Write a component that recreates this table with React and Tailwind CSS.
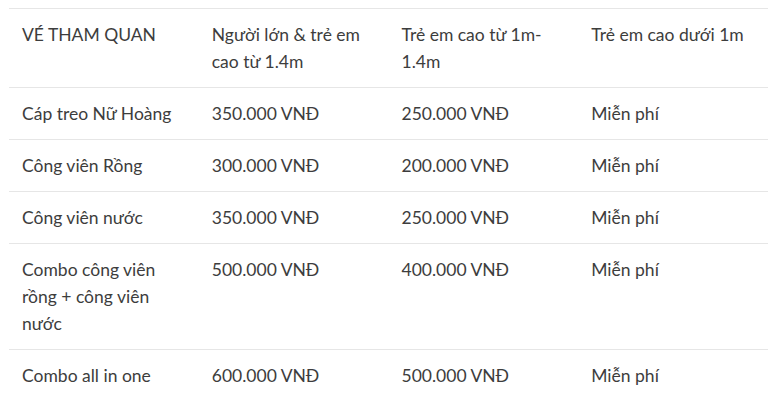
import React from 'react'

const rows = [
  ['Cáp treo Nữ Hoàng', '350.000 VNĐ', '250.000 VNĐ', 'Miễn phí'],
  ['Công viên Rồng', '300.000 VNĐ', '200.000 VNĐ', 'Miễn phí'],
  ['Công viên nước', '350.000 VNĐ', '250.000 VNĐ', 'Miễn phí'],
  ['Combo công viên rồng + công viên nước', '500.000 VNĐ', '400.000 VNĐ', 'Miễn phí'],
  ['Combo all in one', '600.000 VNĐ', '500.000 VNĐ', 'Miễn phí'],
]

function App() {
  return (
    <div className="bg-white pt-2 pl-[9px] w-[781px] h-[409px] overflow-hidden" style={{ fontFamily: 'Lato, "Noto Sans", sans-serif' }}>
      <table className="w-[759px] table-fixed border-collapse text-[17.5px] leading-[27px] text-[#3d3d3d]">
        <thead>
          <tr className="border-t border-[#e6e6e6]">
            <th className="text-left font-normal align-top px-[13px] py-3">VÉ THAM QUAN</th>
            <th className="text-left font-normal align-top px-[13px] py-3">Người lớn &amp; trẻ em cao từ 1.4m</th>
            <th className="text-left font-normal align-top px-[13px] py-3">Trẻ em cao từ 1m-1.4m</th>
            <th className="text-left font-normal align-top px-[13px] py-3">Trẻ em cao dưới 1m</th>
          </tr>
        </thead>
        <tbody>
          {rows.map((r, i) => (
            <tr key={i} className="border-t border-[#e6e6e6]">
              {r.map((c, j) => (
                <td key={j} className="align-top px-[13px] py-3">{c}</td>
              ))}
            </tr>
          ))}
        </tbody>
      </table>
    </div>
  )
}

export default App
